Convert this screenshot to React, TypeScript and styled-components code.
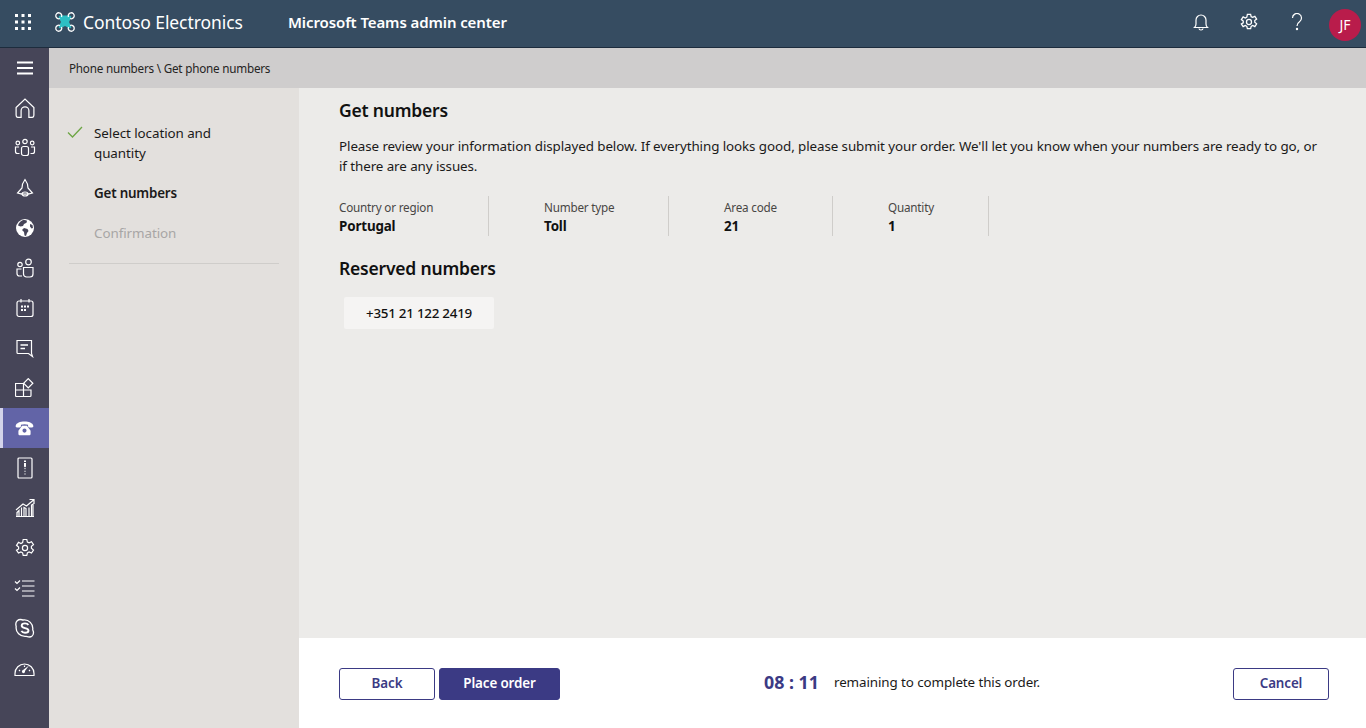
import React from "react";
import styled, { createGlobalStyle } from "styled-components";

const Global = createGlobalStyle`
  html, body { margin: 0; padding: 0; height: 100%; overflow: hidden; }
  body { font-family: "Noto Sans", "Open Sans", sans-serif; color: #111; }
  * { box-sizing: border-box; }
`;

const Page = styled.div`
  width: 1366px; height: 728px; display: flex; flex-direction: column; overflow: hidden;
`;
const TopBar = styled.header`
  height: 48px; flex: none; background: #364c61; border-bottom: 1px solid #1d2c3d;
  display: flex; align-items: center; color: #fff; padding-bottom: 4px;
`;
const Waffle = styled.div`
  width: 46px; display: flex; justify-content: center; margin-right: 8px;
`;
const Brand = styled.div`
  display: flex; align-items: center; gap: 7px; font-size: 17.5px; width: 234px; letter-spacing: -0.08px;
`;
const AppTitle = styled.div`
  font-size: 15px; font-weight: 600; flex: 1; letter-spacing: -0.1px;
`;
const TopIcons = styled.div`
  display: flex; align-items: center; gap: 24px; padding-right: 5px;
`;
const TopIcon = styled.div`
  width: 24px; height: 24px; display: flex; align-items: center; justify-content: center;
`;
const Avatar = styled.div`
  width: 32px; height: 32px; border-radius: 50%; background: #b91c4b; color: #fff;
  display: flex; align-items: center; justify-content: center; font-size: 14px; margin-left: -4px; margin-top: 6px;
`;
const Body = styled.div`
  flex: 1; display: flex; min-height: 0;
`;
const Rail = styled.nav`
  width: 49px; flex: none; background: #464558; display: flex; flex-direction: column;
`;
const RailItem = styled.div<{ $active?: boolean }>`
  height: 40px; display: flex; align-items: center; justify-content: center; color: #fff;
  background: ${(p) => (p.$active ? "#6264a7" : "transparent")};
  border-left: ${(p) => (p.$active ? "3px solid #d3d3ea" : "0")};
  padding-right: ${(p) => (p.$active ? "3px" : "0")};
`;
const Main = styled.div`
  flex: 1; display: flex; flex-direction: column; min-width: 0;
`;
const Crumb = styled.div`
  height: 40px; flex: none; background: #cfcdcd; display: flex; align-items: center; padding-left: 20px;
  font-size: 11.7px; color: #252423; letter-spacing: -0.22px;
`;
const Split = styled.div`
  flex: 1; display: flex; min-height: 0;
`;
const Steps = styled.aside`
  width: 250px; flex: none; background: #e3e0dd; padding: 35px 20px 0 20px;
`;
const StepList = styled.div`
  border-bottom: 1px solid #cfcdca; padding-bottom: 20px;
`;
const Step = styled.div<{ $state: "done" | "current" | "todo" }>`
  position: relative; padding-left: 25px; padding-right: 40px; font-size: 13.4px; line-height: 20px; margin-bottom: 20px;
  letter-spacing: ${(p) => (p.$state === "current" ? "-0.2px" : "-0.07px")};
  font-weight: ${(p) => (p.$state === "current" ? 600 : 400)};
  color: ${(p) => (p.$state === "todo" ? "#a8a6a5" : "#1b1a19")};
  &:last-child { margin-bottom: 0; }
`;
const Check = styled.svg`
  position: absolute; left: -2px; top: 3px;
`;
const Right = styled.div`
  flex: 1; display: flex; flex-direction: column; min-width: 0;
`;
const Content = styled.main`
  flex: 1; background: #ecebe9; padding: 9px 40px 0 40px; min-height: 0;
`;
const H2 = styled.h2`
  margin: 0; font-size: 17.5px; line-height: 26px; font-weight: 600; color: #111; letter-spacing: -0.2px;
`;
const Para = styled.p`
  margin: 13px 0 0; font-size: 13.4px; line-height: 20px; color: #1b1a19; letter-spacing: -0.09px;
`;
const Facts = styled.div`
  display: flex; margin-top: 20px; height: 40px;
`;
const Fact = styled.div<{ $w: number; $pad: number }>`
  width: ${(p) => p.$w}px; padding-left: ${(p) => p.$pad}px; padding-top: 1px; border-right: 1px solid #cfcdca;
  display: flex; flex-direction: column;
`;
const FactLabel = styled.div`
  font-size: 11.7px; line-height: 20px; color: #484644; letter-spacing: -0.2px;
`;
const FactValue = styled.div`
  font-size: 13.4px; line-height: 18px; font-weight: 700; color: #111; letter-spacing: -0.15px;
`;
const H3 = styled(H2)`
  margin-top: 19px;
`;
const NumberChip = styled.div`
  margin: 16px 0 0 5px; width: 150px; height: 32px; background: #f5f4f3; border-radius: 2px;
  display: flex; align-items: center; justify-content: center; font-size: 13.4px; font-weight: 500; color: #111; letter-spacing: -0.25px;
`;
const Footer = styled.footer`
  height: 90px; flex: none; background: #fff; display: flex; align-items: center; padding: 2px 37px 0 40px;
`;
const Button = styled.button<{ $primary?: boolean; $w: number }>`
  width: ${(p) => p.$w}px; height: 32px; border-radius: 3px; border: 1px solid #3b3a84;
  background: ${(p) => (p.$primary ? "#3b3a84" : "#fff")};
  color: ${(p) => (p.$primary ? "#fff" : "#3b3a84")};
  font: 600 13.4px "Noto Sans", sans-serif; letter-spacing: -0.12px; padding: 0 0 2px;
`;
const Timer = styled.div`
  flex: 1; display: flex; align-items: center; padding-left: 204px; margin-top: -4px;
`;
const Time = styled.span`
  font-size: 17.8px; font-weight: 700; color: #3b3a84; width: 70px;
`;
const TimerNote = styled.span`
  font-size: 13.4px; color: #1b1a19; letter-spacing: -0.1px;
`;
const Gap = styled.span`
  display: inline-block; width: 4px;
`;

const S = { fill: "none", stroke: "currentColor", strokeWidth: 1.2 } as const;

const icons: React.ReactNode[] = [
  <svg key="m" width="18" height="14" viewBox="0 0 18 14"><path d="M1 1.500h16M1 7h16M1 12.500h16" stroke="currentColor" strokeWidth="1.800" /></svg>,
  <svg key="h" width="20" height="20" viewBox="1 1 18 18"><path {...S} strokeWidth={1.1} d="M2 9.500 10 2l8 7.500V16.500a2 2 0 0 1-2 2h-2.500v-6a3.500 3.500 0 0 0-7 0v6H4a2 2 0 0 1-2-2z" /></svg>,
  <svg key="t" width="22" height="20" viewBox="0 0 22 20"><g {...S}><circle cx="11" cy="3.500" r="2.200" /><circle cx="3.800" cy="5" r="1.800" /><circle cx="18.200" cy="5" r="1.800" /><rect x="7.500" y="8.500" width="7" height="9" rx="2" /><path d="M5 9H1.500v4.500a2 2 0 0 0 2 2H5.500M17 9h3.500v4.500a2 2 0 0 1-2 2h-2" /></g></svg>,
  <svg key="r" width="20" height="20" viewBox="0 0 20 20"><g {...S}><path d="M10 1.500c-1.500 2-3 5-3 8.500l-4.500 5c2 .8 4.500 1.200 7.500 1.200s5.500-.4 7.500-1.200L13 10c0-3.500-1.500-6.500-3-8.500z" /><ellipse cx="10" cy="16" rx="3" ry="2" /></g></svg>,
  <svg key="g" width="20" height="20" viewBox="0 0 20 20"><circle cx="10" cy="10" r="9" fill="#fff" /><path fill="#464558" d="M7 2.500c2-.8 4-.5 5 .2l-.5 2L9 6 8 8 5.500 8.500 3 7.500C3.500 5.500 5 3.500 7 2.500zM9 10l3.500 1 1 2-1.500 2-1 3-1.500-.5-.5-3.500L7 12zM15 6l2.500 1 .5 3-1.500.5-1.500-2z" /></svg>,
  <svg key="u" width="20" height="20" viewBox="0 0 20 20"><g {...S}><circle cx="5" cy="6.500" r="2.200" /><circle cx="13.500" cy="4" r="2.800" /><path d="M8.500 9.500h9.500v6.500a3 3 0 0 1-3 3h-3.500a3 3 0 0 1-3-3zM6.500 11H2v4.500a2.500 2.500 0 0 0 2.500 2.500h2.500" /></g></svg>,
  <svg key="c" width="20" height="20" viewBox="0 0 20 20"><g {...S}><rect x="2" y="3" width="16" height="15.500" rx="2" /><path d="M6 1v3.500M14 1v3.500" /></g><path fill="currentColor" d="M6 7.500h2v2H6zM9 7.500h2v2H9zM12 7.500h2v2h-2zM6 11h2v2H6zM9 11h2v2H9z" /></svg>,
  <svg key="ch" width="20" height="20" viewBox="1 0 20 20"><path {...S} d="M3 2.500h14.500v13l1 3-4-3H4a1 1 0 0 1-1-1z" /><path stroke="currentColor" strokeWidth="1.600" d="M6.500 7h7.500M6.500 10.500h4.500" /></svg>,
  <svg key="a" width="20" height="20" viewBox="1 0 20 20"><g {...S}><path d="M1.500 5.500h8V18.500H2.500a1 1 0 0 1-1-1zM1.500 12h15.500V17.500a1 1 0 0 1-1 1H9.500" /><rect x="11" y="2" width="6.500" height="6.500" transform="rotate(45 14.250 5.250)" /></g></svg>,
  <svg key="p" width="19" height="15" viewBox="0 0 20 16"><path fill="#fff" fillRule="evenodd" d="M10 .5C5.500.5 1.200 2 .6 5c-.2 1 .4 1.800 1.400 1.800h2.700c1 0 1.500-.6 1.500-1.500V4.100C7.400 3.700 8.600 3.500 10 3.500s2.600.2 3.800.6v1.200c0 .9.500 1.500 1.500 1.500H18c1 0 1.600-.8 1.400-1.800C18.800 2 14.500.5 10 .5zM7.400 5 3.500 10.500V13.500c0 1 .7 1.800 1.700 1.800h9.600c1 0 1.700-.8 1.700-1.800v-3L12.600 5zM10 8a2.200 2.200 0 1 1 0 4.400A2.200 2.200 0 0 1 10 8z" /></svg>,
  <svg key="z" width="16" height="22" viewBox="0 0 16 22"><rect {...S} x="1" y="1" width="14" height="20" rx="1" /><path fill="currentColor" d="M7 3.500h2v1.500H7zM7 6h2v3.500l-1 1-1-1z" /><path stroke="currentColor" strokeDasharray="1.200 1.500" d="M8 11v8" /></svg>,
  <svg key="ar" width="20" height="20" viewBox="0 0 20 20"><g {...S}><path d="M1 12 8 6l3.500 2L18.500 2M14.500 1.500h4.500V6" /><path d="M1 18.500h18M2 18.500v-4l2-2v6M6.500 18.500v-9M9 18.500v-9l2 1v8M14 18.500v-9M16.500 18.500V7l1.500-1v12.500" /></g></svg>,
  <svg key="gr" width="20" height="20" viewBox="0 0 20 20"><g {...S}><path d="M8.200 1.500h3.600l.6 2.600 1.700.8 2.400-1.200 2 3-2.100 1.600v2l2.100 1.800-2 3-2.400-1.200-1.700.9-.6 2.600H8.200l-.6-2.600-1.700-.9-2.400 1.200-2-3L3.600 11V9L1.500 7.300l2-3 2.400 1.200 1.700-.9z" /><circle cx="10" cy="10" r="2.600" /></g></svg>,
  <svg key="l" width="21" height="18" viewBox="0 0 21 18"><g {...S}><path d="M8 2h12.500M8 7h12.500M8 12h12.500M8 17h12.500" /><path d="M1 2.500 3 4.500 6 1.500M1 9.500 3 11.500 6 8.500" /></g></svg>,
  <svg key="s" width="20" height="20" viewBox="0 0 20 20"><path fill="none" stroke="currentColor" strokeWidth="1.300" d="M5.500 1.500c1 0 1.700.4 2.700.5 5.500-.8 10.300 4 9.500 9.500.1 1 .8 1.800.8 3 0 2.500-2 4.500-4.300 4.500-1.100 0-2-.5-2.900-.7C5 19 .4 14.300 1.200 8.500 1 7.500.8 7 .8 6c0-2.500 2.200-4.500 4.700-4.500z" /><path fill="none" stroke="currentColor" strokeWidth="1.900" d="M13.300 7c-.5-1-1.700-1.600-3.300-1.600-1.900 0-3.300.9-3.300 2.300 0 3.100 6.800 1.600 6.800 4.800 0 1.400-1.500 2.300-3.500 2.300-1.700 0-3-.7-3.600-1.900" /></svg>,
  <svg key="d" width="21" height="18" viewBox="0 0 21 18"><g {...S}><path d="M1 16.500v-2a9.500 9.500 0 0 1 19 0v2zM1 16.500h19" /><path d="M5 11 6 12M10.500 6.500v1.500M16 11l-1 1" /></g><path fill="currentColor" d="m15 6.500-4 5.500a1.600 1.600 0 1 1-2-1z" /></svg>,
];

export default function App() {
  return (
    <Page>
      <Global />
      <TopBar>
        <Waffle>
          <svg width="16" height="16" viewBox="0 0 16 16" fill="#fff">
            {[0, 6.5, 13].map((y) => [0, 6.5, 13].map((x) => <rect key={`${x}-${y}`} x={x} y={y} width="3" height="3" />))}
          </svg>
        </Waffle>
        <Brand>
          <svg width="22" height="22" viewBox="0 0 22 22">
            <path fill="#2dbfc4" d="M6 4.500h10l1.500 1.500-2.500 5 2.500 5-1.500 1.500-5-2.500-5 2.500L4.500 16 7 11 4.500 6z" />
            <g fill="none" stroke="#fff" strokeWidth="1.300">
              <path d="M7.500 6A3 3 0 1 0 6 7.500M14.500 6A3 3 0 1 1 16 7.500M7.500 16A3 3 0 1 1 6 14.500M14.500 16A3 3 0 1 0 16 14.500" />
            </g>
          </svg>
          Contoso Electronics
        </Brand>
        <AppTitle>Microsoft Teams admin center</AppTitle>
        <TopIcons>
          <TopIcon>
            <svg width="16" height="18" viewBox="0 0 16 18" fill="none" stroke="#fff" strokeWidth="1.200"><path d="M1.500 14.500c1-.8 1.500-2 1.500-3.500V7a5 5 0 0 1 10 0v4c0 1.500.5 2.700 1.500 3.500zM6 15.500c.2 2 3.800 2 4 0" /></svg>
          </TopIcon>
          <TopIcon>
            <svg width="18" height="18" viewBox="0 0 20 20" fill="none" stroke="#fff" strokeWidth="1.400"><path d="M8.200 1.500h3.600l.6 2.600 1.700.8 2.400-1.200 2 3-2.100 1.600v2l2.100 1.800-2 3-2.400-1.200-1.700.9-.6 2.600H8.200l-.6-2.600-1.700-.9-2.400 1.200-2-3L3.600 11V9L1.500 7.300l2-3 2.400 1.200 1.700-.9z" /><circle cx="10" cy="10" r="2.800" /></svg>
          </TopIcon>
          <TopIcon>
            <svg width="12" height="18" viewBox="0 0 12 18" fill="none" stroke="#fff" strokeWidth="1.200"><path d="M1.500 5a4.500 4.500 0 1 1 7 3.700C6.800 9.800 6 10.800 6 13" /><circle cx="6" cy="16" r=".6" fill="#fff" /></svg>
          </TopIcon>
          <Avatar>JF</Avatar>
        </TopIcons>
      </TopBar>
      <Body>
        <Rail>
          {icons.map((icon, i) => (
            <RailItem key={i} $active={i === 9}>{icon}</RailItem>
          ))}
        </Rail>
        <Main>
          <Crumb>Phone numbers \ Get phone numbers</Crumb>
          <Split>
            <Steps>
              <StepList>
                <Step $state="done">
                  <Check width="16" height="12" viewBox="0 0 16 12" fill="none" stroke="#6da544" strokeWidth="1.300"><path d="M1 6.500 5.500 11 15 1" /></Check>
                  Select location and quantity
                </Step>
                <Step $state="current">Get numbers</Step>
                <Step $state="todo">Confirmation</Step>
              </StepList>
            </Steps>
            <Right>
              <Content>
                <H2>Get numbers</H2>
                <Para>Please review your information displayed below. If everything looks good, please submit your order. We'll let you know when your numbers are ready to go, or if there are any issues.</Para>
                <Facts>
                  <Fact $w={150} $pad={0}><FactLabel>Country or region</FactLabel><FactValue>Portugal</FactValue></Fact>
                  <Fact $w={180} $pad={55}><FactLabel>Number type</FactLabel><FactValue>Toll</FactValue></Fact>
                  <Fact $w={164} $pad={55}><FactLabel>Area code</FactLabel><FactValue>21</FactValue></Fact>
                  <Fact $w={156} $pad={55}><FactLabel>Quantity</FactLabel><FactValue>1</FactValue></Fact>
                </Facts>
                <H3>Reserved numbers</H3>
                <NumberChip>+351 21 122 2419</NumberChip>
              </Content>
              <Footer>
                <Button $w={96}>Back</Button>
                <Gap />
                <Button $primary $w={121}>Place order</Button>
                <Timer>
                  <Time>08 : 11</Time>
                  <TimerNote>remaining to complete this order.</TimerNote>
                </Timer>
                <Button $w={96}>Cancel</Button>
              </Footer>
            </Right>
          </Split>
        </Main>
      </Body>
    </Page>
  );
}
